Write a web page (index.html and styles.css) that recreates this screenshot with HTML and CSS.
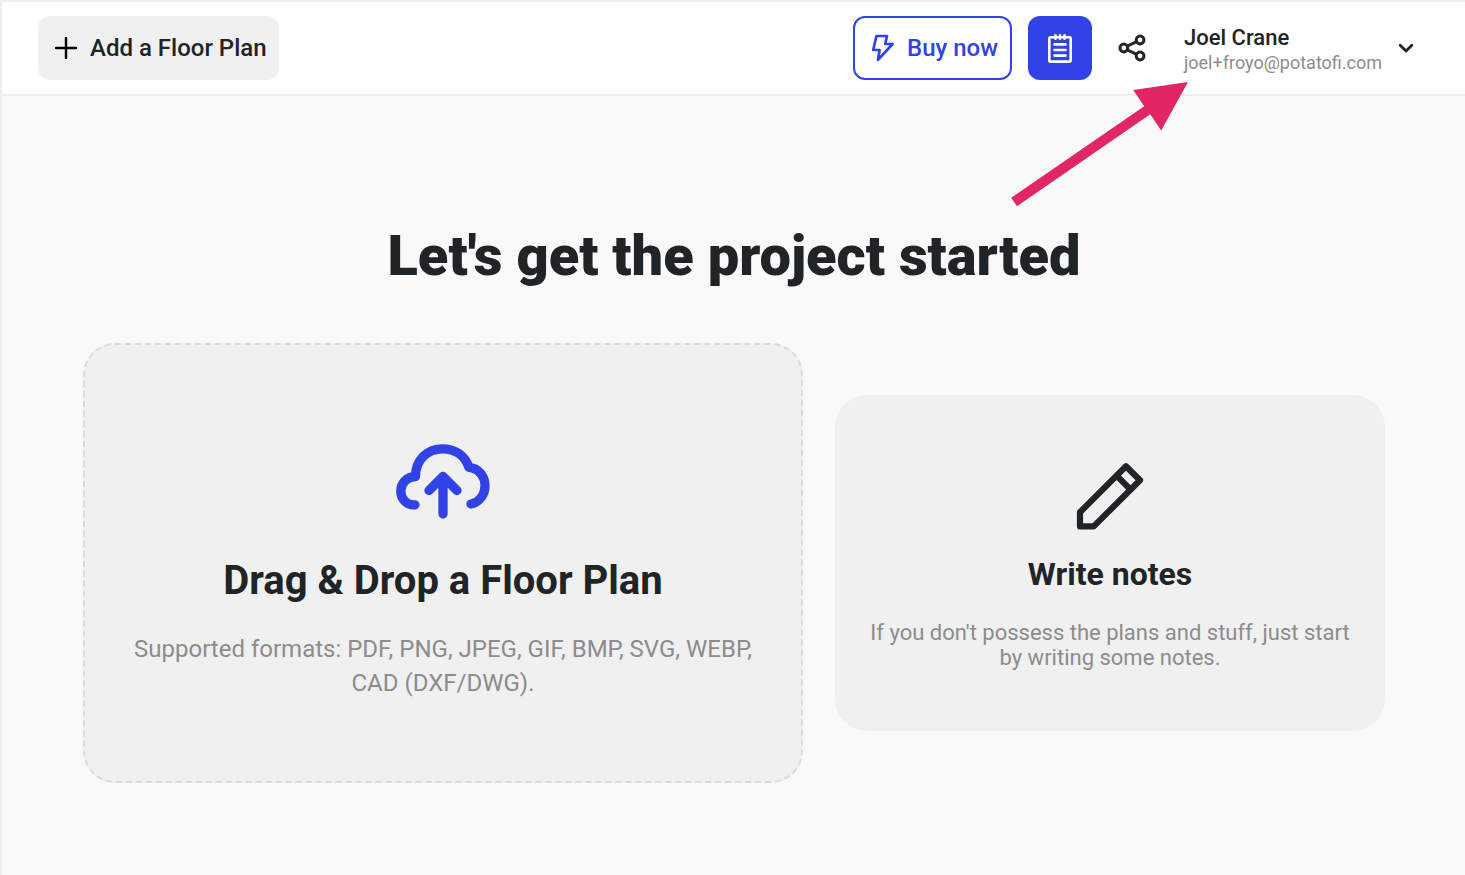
FILE: index.html
```html
<!DOCTYPE html>
<html lang="en">
<head>
<meta charset="utf-8">
<title>Let's get the project started</title>
<link rel="stylesheet" href="styles.css">
</head>
<body>
<div class="app">
  <header class="topbar">
    <button class="btn btn-add">
      <svg class="icon-plus" width="22" height="22" viewBox="0 0 22 22"><path d="M11 1v20M1 11h20"/></svg>
      <span>Add a Floor Plan</span>
    </button>
    <div class="actions">
      <button class="btn btn-buy">
        <svg class="icon-bolt" width="24" height="28" viewBox="870 34 24 28"><path d="M876.400 36h10.600l-1.800 8h7.400L878 59.800l1.600-9.800h-6.400z"/></svg>
        <span>Buy now</span>
      </button>
      <button class="btn btn-notes" aria-label="Notes">
        <svg class="icon-notepad" width="24" height="32" viewBox="1048 32 24 32"><rect x="1049.300" y="37.200" width="21.400" height="24.400" rx="1.200"/><path d="M1055.500 35.200v3.600M1060 35.200v3.600M1064.500 35.200v3.600M1054.500 44.400h11M1054.500 50h11M1054.500 55.600h11"/></svg>
      </button>
      <button class="btn btn-share" aria-label="Share">
        <svg class="icon-share" width="28" height="28" viewBox="1118 34 28 28"><path d="M1127.500 46l8.700-4.200M1127.500 50l8.700 4.200"/><circle cx="1123.800" cy="48" r="3.900"/><circle cx="1140.100" cy="40" r="3.900"/><circle cx="1140.100" cy="56" r="3.900"/></svg>
      </button>
      <div class="account">
        <div class="who">
          <div class="name">Joel Crane</div>
          <div class="email">joel+froyo@potatofi.com</div>
        </div>
        <svg class="icon-chevron" width="16" height="12" viewBox="0 0 16 12"><path d="M2.200 3.200L8 9l5.800-5.800"/></svg>
      </div>
    </div>
  </header>
  <main class="start">
    <h1 class="title">Let's get the project started</h1>
    <div class="cards">
      <section class="card drop">
        <svg class="icon-cloud" width="96" height="78" viewBox="395 442 96 78"><path d="M415 504.800C407 505.500 400.800 499 400.800 491.200C400.800 483 407 476.800 415.500 476.500C415.500 460 427 448.800 442.500 448.800C455.500 448.800 465 456 469 467.400C478 468 485 476 485 485.500C485 495 479 502.500 471 504"/><path d="M443 514v-36M429 490.500l14-14 14 14"/></svg>
        <h2 class="drop-title">Drag &amp; Drop a Floor Plan</h2>
        <p class="drop-text">Supported formats: PDF, PNG, JPEG, GIF, BMP, SVG, WEBP,<br>CAD (DXF/DWG).</p>
      </section>
      <section class="card notes">
        <svg class="icon-pencil" width="70" height="70" viewBox="1075 461 70 70"><path d="M1080 526.400v-14.200l46-46 14 14-46.300 46.200zM1116.600 475.600l13.600 13.600"/></svg>
        <h2 class="notes-title">Write notes</h2>
        <p class="notes-text">If you don't possess the plans and stuff, just start<br>by writing some notes.</p>
      </section>
    </div>
  </main>
  <svg class="pointer" width="180" height="128" viewBox="1010 80 180 128"><path d="M1188 82l-26.800 48.500-11-16.200-133.200 91.900-5.800-8.400 133-91.500-11-16.200z"/></svg>
</div>
</body>
</html>
```

FILE: styles.css
```css
* { box-sizing: border-box; }
body { margin: 0; font-family: Roboto, sans-serif; color: #212427; }
svg { display: block; flex: none; fill: none; }
h1, h2, p { margin: 0; white-space: nowrap; }
.app { position: relative; height: 875px; overflow: hidden; background: #f9f9f9; border-left: 2px solid #efefef; border-top: 2px solid #efefef; }
.topbar { display: flex; justify-content: space-between; height: 94px; padding: 14px 51px 0 36px; background: #fff; border-bottom: 2px solid #efefef; }
.btn { display: flex; align-items: center; height: 64px; padding: 0; border: 0; border-radius: 12px; background: none; font: 500 24px/32px Roboto, sans-serif; color: #212427; white-space: nowrap; }
.btn-add { width: 241px; padding-left: 17px; gap: 13px; background: #f0f0f0; }
.icon-plus { stroke: #000; stroke-width: 2.4; stroke-linecap: round; }
.actions { display: flex; }
.btn-buy { width: 159px; padding-left: 15px; gap: 13px; border: 2px solid #3142e6; color: #3142e6; }
.icon-bolt { stroke: #3142e6; stroke-width: 2.7; stroke-linejoin: round; }
.btn-notes { width: 64px; margin-left: 16px; justify-content: center; background: #3142e6; }
.icon-notepad { stroke: #fff; stroke-width: 2.6; stroke-linejoin: round; stroke-linecap: round; }
.btn-share { margin-left: 26px; }
.icon-share { stroke: #212427; stroke-width: 3; }
.account { display: flex; align-items: center; margin-left: 38px; height: 64px; }
.who { width: 214px; padding-top: 4px; }
.name { font-size: 22px; font-weight: 500; line-height: 26px; }
.email { font-size: 18px; line-height: 24px; color: #8c8c8c; }
.icon-chevron { stroke: #212427; stroke-width: 2.8; stroke-linecap: round; stroke-linejoin: round; }
.start { padding: 124px 0 0 1px; }
.title { font-size: 56px; font-weight: 900; line-height: 72px; text-align: center; }
.cards { display: flex; justify-content: center; align-items: center; gap: 32px; margin-top: 51px; }
.card { display: flex; flex-direction: column; align-items: center; background: #f0f0f0; border-radius: 32px; text-align: center; }
.drop { width: 720px; height: 440px; padding-top: 97px; border: 2px dashed #dadada; }
.icon-cloud { stroke: #3142e6; stroke-width: 9.3; stroke-linecap: round; stroke-linejoin: round; }
.drop-title { margin-top: 37px; font-size: 40px; font-weight: 700; line-height: 48px; }
.drop-text { margin-top: 27px; font-size: 24px; line-height: 34px; color: #8c8c8c; }
.notes { width: 550px; height: 336px; padding-top: 66px; }
.icon-pencil { stroke: #212427; stroke-width: 6.2; stroke-linejoin: round; }
.notes-title { margin-top: 24px; font-size: 32px; font-weight: 700; line-height: 38px; }
.notes-text { margin-top: 27px; font-size: 22px; line-height: 25px; color: #8c8c8c; }
.pointer { position: absolute; left: 1008px; top: 78px; fill: #e02664; }
```
